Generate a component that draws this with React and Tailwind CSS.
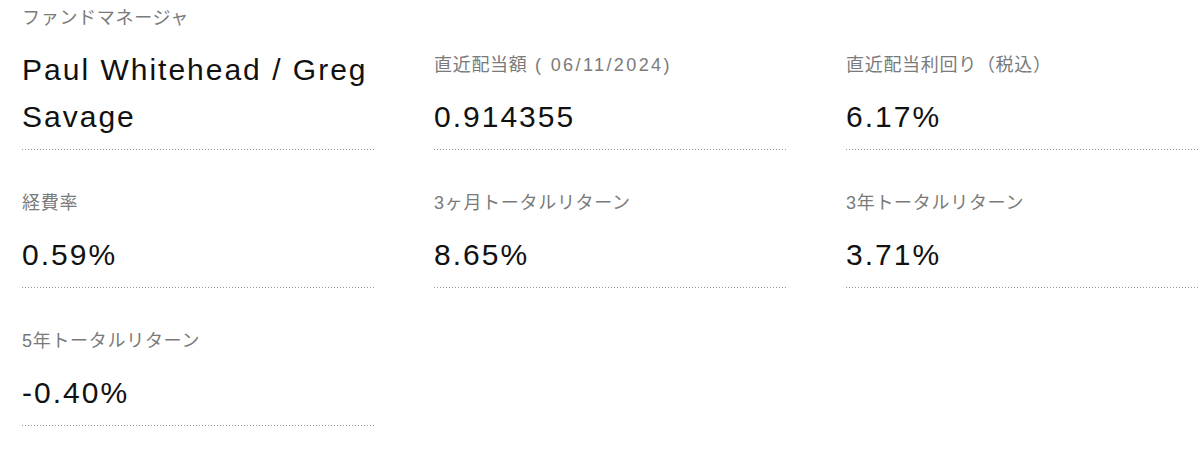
const FONT = "font-['Liberation_Sans','Noto_Sans_CJK_JP',sans-serif]";

const items = [
  { label: 'ファンドマネージャ', value: 'Paul Whitehead / Greg Savage' },
  { label: '直近配当額', date: ' ( 06/11/2024)', value: '0.914355' },
  { label: '直近配当利回り（税込）', value: '6.17%' },
  { label: '経費率', value: '0.59%' },
  { label: '3ヶ月トータルリターン', value: '8.65%' },
  { label: '3年トータルリターン', value: '3.71%' },
  { label: '5年トータルリターン', value: '-0.40%' },
];

function Stat({ label, date, value }) {
  return (
    <div className="flex flex-col justify-end">
      <div className="text-[18px] leading-6 tracking-[0.7px] text-[#7a7a7a] mb-4 whitespace-pre">
        {label}
        {date && <span className="tracking-[2.4px]">{date}</span>}
      </div>
      <div className="text-[30px] leading-[47px] tracking-[2px] text-[#111] pb-[9px]">{value}</div>
      <div className="h-px bg-[repeating-linear-gradient(to_right,#9a9a9a_0_1px,transparent_1px_3px)]" />
    </div>
  );
}

export default function App() {
  return (
    <div className={`${FONT} bg-white w-[1200px] h-[449px] pt-[6px] pl-[22px] overflow-hidden`}>
      <div className="grid grid-cols-[352px_352px_352px] gap-x-[60px] gap-y-[41px]">
        {items.map(it => (
          <Stat key={it.label} label={it.label} date={it.date} value={it.value} />
        ))}
      </div>
    </div>
  );
}
